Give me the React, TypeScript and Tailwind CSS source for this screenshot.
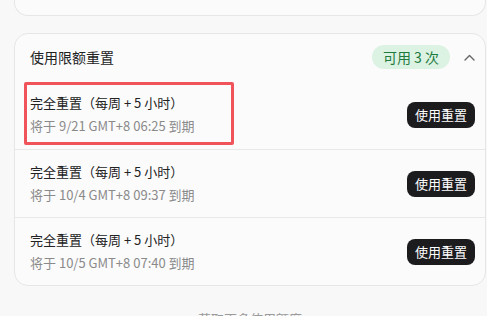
import { useState } from "react";

const RESETS = [
  { id: 1, title: "完全重置（每周 + 5 小时）", expires: "将于 9/21 GMT+8 06:25 到期" },
  { id: 2, title: "完全重置（每周 + 5 小时）", expires: "将于 10/4 GMT+8 09:37 到期" },
  { id: 3, title: "完全重置（每周 + 5 小时）", expires: "将于 10/5 GMT+8 07:40 到期" },
];

const font = { fontFamily: '"Noto Sans CJK SC", "Noto Sans", sans-serif' };

export default function App() {
  const [open, setOpen] = useState(true);

  return (
    <div className="h-[316px] overflow-hidden bg-[#f8f8f9] pl-[14px] pr-[1px] text-[#222]" style={font}>
      <div className="h-[16px] rounded-b-[14px] border-x border-b border-[#e6e6e8] bg-[#fbfbfc]" />

      <div className="relative mt-[17px] rounded-[14px] border border-[#e6e6e8] bg-[#fbfbfc]">
        <div className="flex h-[46px] items-center pl-[15px] pr-[6px]">
          <h2 className="text-[14px] leading-5 text-[#222]">使用限额重置</h2>
          <span className="ml-auto rounded-full bg-[#dcf3e3] px-[11px] py-[2px] text-[14px] leading-5 text-[#1f7a3e]">
            可用 3 次
          </span>
          <button className="ml-[9px] flex h-5 w-5 items-center justify-center text-[#666]" onClick={() => setOpen(!open)}>
            <svg width="11" height="7" viewBox="0 0 11 7" fill="none" stroke="currentColor" strokeWidth="1.4" strokeLinecap="round" strokeLinejoin="round">
              <path d={open ? "M1 6 5.5 1.5 10 6" : "M1 1 5.5 5.5 10 1"} />
            </svg>
          </button>
        </div>

        {open
          ? RESETS.map((r, i) => (
              <div
                key={r.id}
                className={`flex items-center pl-[15px] pr-[10px] ${i > 0 ? "border-t border-[#e8e8ea] py-[12px]" : "pt-[13px] pb-[13px]"}`}
              >
                <div>
                  <div className="text-[13px] leading-5 text-[#222]">{r.title}</div>
                  <div className="mt-[3px] text-[13px] leading-5 text-[#8a8a8a]">{r.expires}</div>
                </div>
                <button className="ml-auto rounded-[8px] bg-[#1c1c1f] px-[8px] py-[3px] text-[13px] leading-5 text-white">
                  使用重置
                </button>
              </div>
            ))
          : null}

        {/* annotation box over first row */}
        <div className="pointer-events-none absolute left-[9px] top-[48px] h-[63px] w-[210px] rounded-[2px] border-[3px] border-[#f0545a]" />
      </div>

      <div className="mt-[23px] text-center text-[13px] leading-5 text-[#9a9a9a]">获取更多使用额度</div>
    </div>
  );
}
